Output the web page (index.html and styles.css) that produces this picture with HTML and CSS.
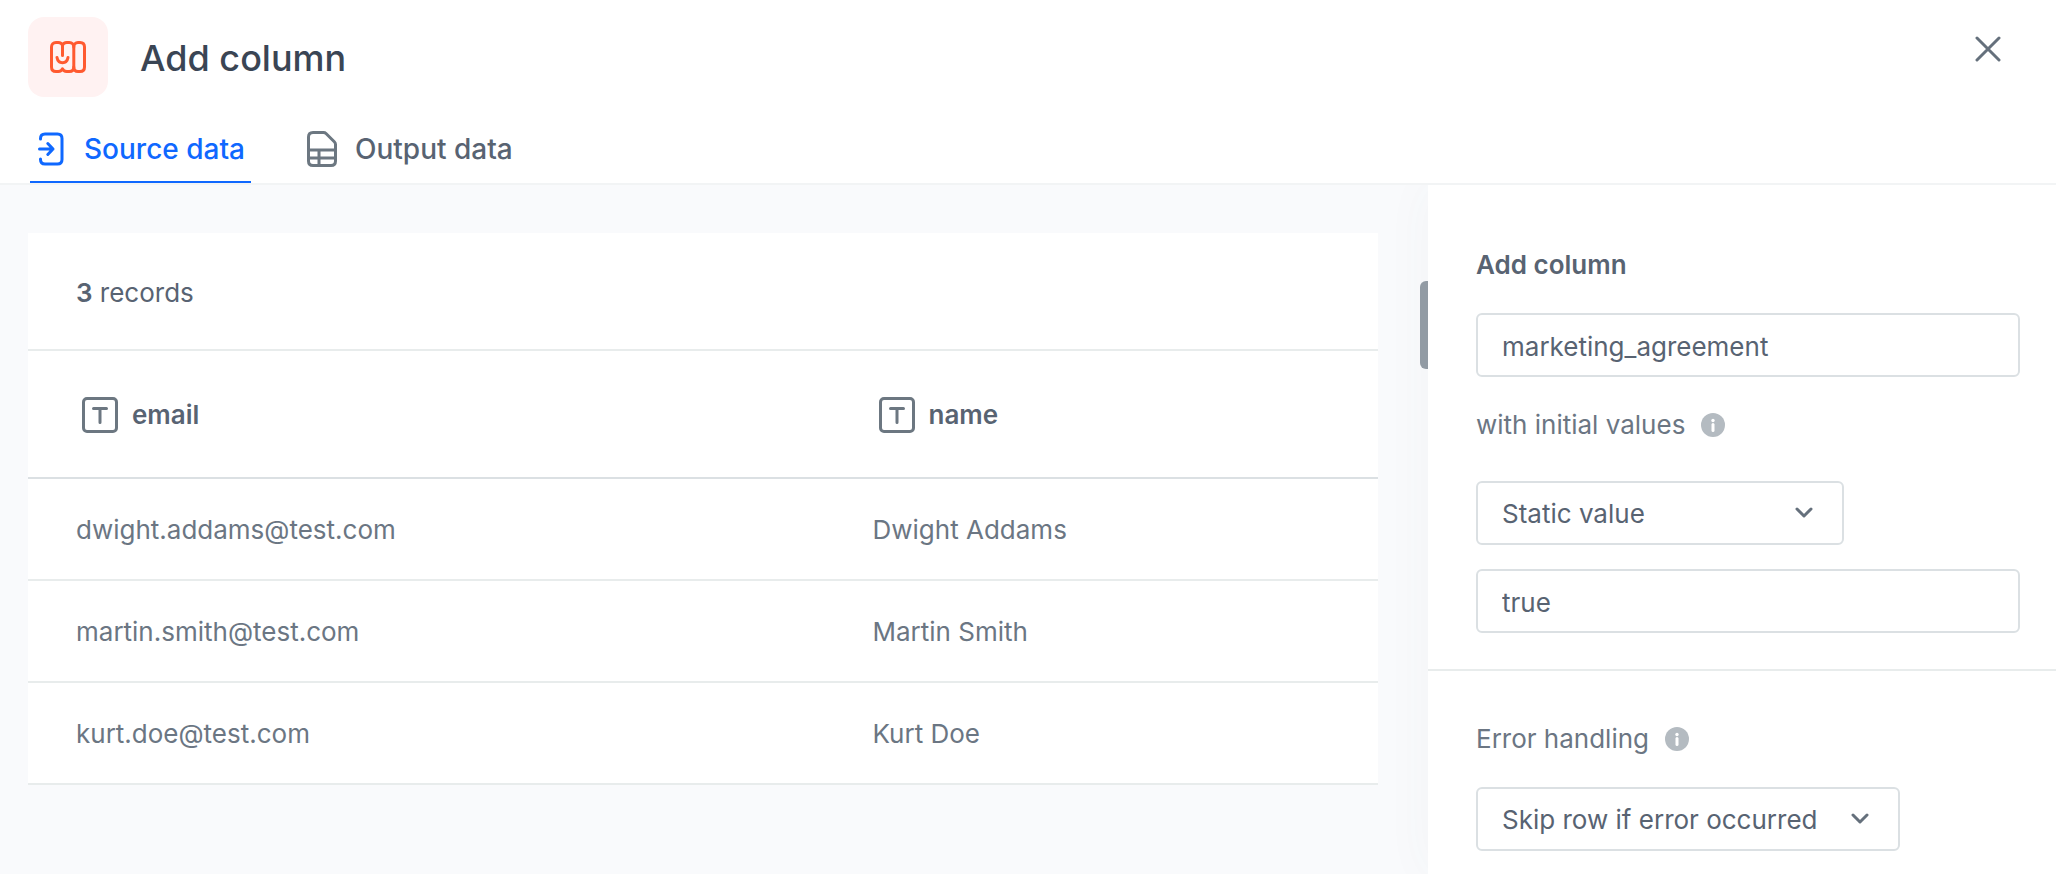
FILE: index.html
```
<!DOCTYPE html>
<html lang="en">
<head>
    <meta charset="UTF-8">
    <meta name="viewport" content="width=device-width,initial-scale=1.0">
    <title>Add column</title>
    <link rel="stylesheet" href="styles.css">
</head>
<body>
<header class="header">
    <div class="title-bar">
        <div class="logo">
            <svg width="36" height="32" viewBox="0 0 36 32" fill="none" stroke="#ff5a30" stroke-width="3" stroke-linecap="round" stroke-linejoin="round">
                <path d="M12.5 14.5V4.2C11.8 2.4 10.3 1.5 8.3 1.5H6C3.2 1.5 1.5 3.2 1.5 6v20c0 2.8 1.7 4.5 4.5 4.5h2.3c2 0 3.5-.9 4.2-2.7.7 1.8 2.2 2.7 4.2 2.7h2.6c2.8 0 4.5-1.7 4.5-4.5V6c0-2.8-1.7-4.5-4.5-4.5h-2.6c-2 0-3.5.9-4.2 2.7"/>
                <path d="M23.8 6c0-2.8 1.7-4.5 4.2-4.5h2c2.8 0 4.5 1.7 4.5 4.500v20c0 2.8-1.7 4.5-4.5 4.5h-2c-2.5 0-4.2-1.7-4.2-4.5"/>
                <path d="M7 16.5c.6 3.3 2.7 5.2 5.5 5.2s4.900-1.900 5.500-5.200"/>
            </svg>
        </div>
        <h1>Add column</h1>
        <button class="close" type="button" aria-label="Close">
            <svg width="26" height="26" viewBox="0 0 26 26" fill="none" stroke="#65707c" stroke-width="3" stroke-linecap="round">
                <path d="M2 2l22 22M24 2L2 24"/>
            </svg>
        </button>
    </div>
    <nav class="tabs">
        <a class="tab cur" href="#source">
            <svg width="28" height="34" viewBox="0 0 28 34" fill="none" stroke="currentColor" stroke-width="3" stroke-linecap="round" stroke-linejoin="round">
                <path d="M2.500 7V6.500c0-3 1.500-4.500 4.500-4.500h12.500c3 0 4.500 1.500 4.500 4.500v21c0 3-1.500 4.500-4.500 4.500H7c-3 0-4.500-1.500-4.500-4.500V27"/>
                <path d="M1.500 17h13.500M9.800 11.500l5.200 5.500-5.200 5.500"/>
            </svg>
            Source data
        </a>
        <a class="tab" href="#output">
            <svg width="30" height="36" viewBox="0 0 30 36" fill="none" stroke="#6c7781" stroke-width="3" stroke-linejoin="round">
                <path d="M6 1.500h10.500c1 0 1.800.3 2.500 1l8.300 8.300c.8.800 1.200 1.500 1.200 2.600V30c0 3-1.500 4.500-4.500 4.500H6c-3 0-4.500-1.500-4.500-4.500V6c0-3 1.500-4.500 4.500-4.500z"/>
                <path d="M1.500 19h27M1.500 27h27M12 19v15.500"/>
            </svg>
            Output data
        </a>
    </nav>
</header>
<div class="content">
    <main class="data">
        <div class="card">
            <div class="records"><b>3</b> records</div>
            <table>
                <thead>
                <tr>
                    <th scope="col">
                        <div class="col-name">
                            <svg width="36" height="36" viewBox="0 0 36 36" fill="none" stroke="#6c7781" stroke-width="3" stroke-linecap="round">
                                <rect x="1.500" y="1.500" width="33" height="33" rx="3.500"/>
                                <path d="M11.500 11.500h13M18 11.500v14"/>
                            </svg>
                            email
                        </div>
                    </th>
                    <th scope="col">
                        <div class="col-name">
                            <svg width="36" height="36" viewBox="0 0 36 36" fill="none" stroke="#6c7781" stroke-width="3" stroke-linecap="round">
                                <rect x="1.500" y="1.500" width="33" height="33" rx="3.500"/>
                                <path d="M11.500 11.500h13M18 11.500v14"/>
                            </svg>
                            name
                        </div>
                    </th>
                </tr>
                </thead>
                <tbody>
                <tr>
                    <td>dwight.addams@test.com</td>
                    <td>Dwight Addams</td>
                </tr>
                <tr>
                    <td>martin.smith@test.com</td>
                    <td>Martin Smith</td>
                </tr>
                <tr>
                    <td>kurt.doe@test.com</td>
                    <td>Kurt Doe</td>
                </tr>
                </tbody>
            </table>
        </div>
    </main>
    <aside class="side">
        <div class="handle"></div>
        <form>
            <section class="group">
                <label class="label strong" for="column">Add column</label>
                <input class="field" id="column" type="text" value="marketing_agreement">
                <div class="label">
                    <label for="mode">with initial values</label>
                    <svg width="24" height="24" viewBox="0 0 24 24">
                        <circle cx="12" cy="12" r="12" fill="#b4bbc1"/>
                        <circle cx="12" cy="7.500" r="1.700" fill="#fff"/>
                        <path d="M12 11.500v6" stroke="#fff" stroke-width="3" stroke-linecap="round"/>
                    </svg>
                </div>
                <div class="select mode">
                    <select class="field" id="mode">
                        <option>Static value</option>
                    </select>
                    <svg width="18" height="12" viewBox="0 0 18 12" fill="none" stroke="#65707c" stroke-width="3" stroke-linecap="round" stroke-linejoin="round">
                        <path d="M2 2l7 7 7-7"/>
                    </svg>
                </div>
                <input class="field" type="text" value="true" aria-label="Value">
            </section>
            <section class="group">
                <div class="label">
                    <label for="error">Error handling</label>
                    <svg width="24" height="24" viewBox="0 0 24 24">
                        <circle cx="12" cy="12" r="12" fill="#b4bbc1"/>
                        <circle cx="12" cy="7.500" r="1.700" fill="#fff"/>
                        <path d="M12 11.500v6" stroke="#fff" stroke-width="3" stroke-linecap="round"/>
                    </svg>
                </div>
                <div class="select error">
                    <select class="field" id="error">
                        <option>Skip row if error occurred</option>
                    </select>
                    <svg width="18" height="12" viewBox="0 0 18 12" fill="none" stroke="#65707c" stroke-width="3" stroke-linecap="round" stroke-linejoin="round">
                        <path d="M2 2l7 7 7-7"/>
                    </svg>
                </div>
            </section>
        </form>
    </aside>
</div>
</body>
</html>
```
FILE: styles.css
```
* {
    box-sizing: border-box;
}

body {
    display: flex;
    flex-direction: column;
    min-height: 100vh;
    margin: 0;
    background: #fff;
    color: #6b7683;
    font: 26px/32px Inter, "Liberation Sans", sans-serif;
}

svg {
    flex: none;
}

.header {
    position: relative;
    z-index: 1;
    padding: 17px 28px 0;
    background: #fff;
    border-bottom: 2px solid #f2f4f5;
}

.title-bar {
    display: flex;
    align-items: center;
    gap: 32px;
}

.logo {
    display: flex;
    align-items: center;
    justify-content: center;
    width: 80px;
    height: 80px;
    background: #fff2f2;
    border-radius: 16px;
}

h1 {
    margin: 0;
    padding-top: 2px;
    color: #3a4554;
    font-size: 36px;
    font-weight: 500;
    line-height: 44px;
}

.close {
    display: flex;
    align-self: flex-start;
    margin: 19px 27px 0 auto;
    padding: 0;
    background: none;
    border: none;
}

.tabs {
    display: flex;
    gap: 50px;
    padding-left: 2px;
    margin-top: 22px;
}

.tab {
    display: flex;
    align-items: center;
    gap: 18px;
    height: 64px;
    padding: 0 6px 2px;
    border-bottom: 2px solid transparent;
    color: #586372;
    font-size: 28px;
    font-weight: 500;
    text-decoration: none;
}

.tab.cur {
    padding-left: 8px;
    color: #0f68ff;
    border-color: #0f68ff;
}

.content {
    display: flex;
    flex: 1;
    overflow: hidden;
}

.data {
    flex: 1;
    padding: 48px 50px 48px 28px;
    background: #f9fafc;
}

.card {
    background: #fff;
}

.records {
    padding: 44px 48px 40px;
    color: #586372;
    border-bottom: 2px solid #e8ecec;
}

.records b {
    font-weight: 600;
}

table {
    width: 100%;
    border-collapse: separate;
    border-spacing: 0;
    table-layout: fixed;
}

th {
    height: 128px;
    padding: 2px 54px 0;
    border-bottom: 2px solid #dbe0e3;
    color: #586372;
    font-weight: 600;
    text-align: left;
}

th:first-child {
    width: 59%;
}

.col-name {
    display: flex;
    align-items: center;
    gap: 14px;
}

td {
    height: 102px;
    padding: 2px 48px 0;
    border-bottom: 2px solid #e8ecec;
}

.side {
    position: relative;
    width: 628px;
    background: #fff;
    box-shadow: 0 0 48px rgba(88, 99, 114, 0.04);
}

/* drag handle on the panel's left edge */
.handle {
    position: absolute;
    top: 96px;
    right: 100%;
    width: 8px;
    height: 88px;
    background: #929ba4;
    border-radius: 6px 0 0 6px;
}

.group {
    display: flex;
    flex-direction: column;
    align-items: flex-start;
    padding: 64px 36px 36px 48px;
    border-bottom: 2px solid #e8ecec;
}

.group + .group {
    padding-top: 52px;
    padding-bottom: 20px;
    border: none;
}

.label {
    display: flex;
    align-items: center;
    gap: 16px;
    margin-bottom: 32px;
}

.strong {
    color: #586372;
    font-weight: 600;
}

.field {
    width: 100%;
    height: 64px;
    padding: 2px 24px 0;
    background: #fff;
    border: 2px solid #dbe0e3;
    border-radius: 6px;
    color: #586372;
    font: inherit;
    appearance: none;
}

.field + .label {
    margin-top: 32px;
    margin-bottom: 40px;
}

.select {
    position: relative;
}

.select svg {
    position: absolute;
    top: 26px;
    right: 31px;
    pointer-events: none;
}

.mode {
    width: 368px;
    margin-bottom: 24px;
}

.error {
    width: 424px;
}
```
